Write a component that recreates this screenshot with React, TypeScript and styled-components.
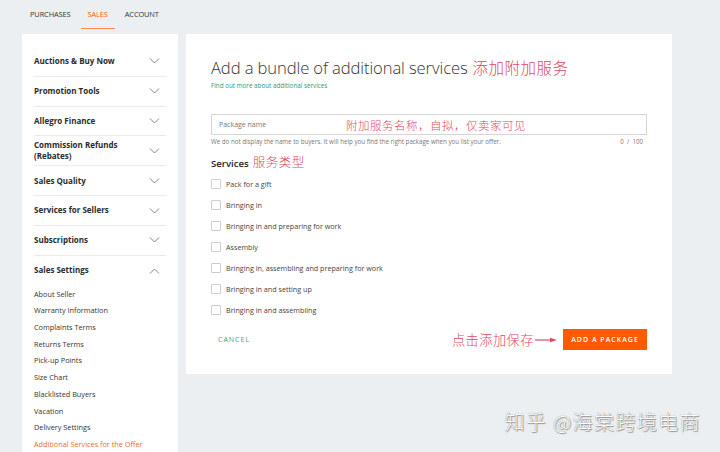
import styled, { createGlobalStyle } from "styled-components";

const GlobalStyle = createGlobalStyle`
  html, body {
    margin: 0;
    padding: 0;
    background: #eceff2;
    font-family: "Open Sans", "Noto Sans CJK SC", sans-serif;
    color: #222;
  }
  * { box-sizing: border-box; }
`;

const Page = styled.div`
  position: relative;
  width: 720px;
  height: 452px;
  overflow: hidden;
  padding-left: 22px;
`;

const Tabs = styled.nav`
  display: flex;
  height: 34px;
  padding-left: 8px;
  gap: 17px;
`;

const Tab = styled.div<{ $active?: boolean }>`
  display: flex;
  align-items: center;
  height: 29px;
  font-size: 7.4px;
  letter-spacing: -0.1px;
  color: ${(p) => (p.$active ? "#ff5a00" : "#333")};
  border-bottom: 1px solid ${(p) => (p.$active ? "#ff8a50" : "transparent")};
  ${(p) => p.$active && "margin: 0 -7px; padding: 0 7px;"}
`;

const Layout = styled.div`
  display: grid;
  grid-template-columns: 156px 486px;
  gap: 8px;
  align-items: start;
`;

const Sidebar = styled.aside`
  background: #fff;
  padding: 13px 12px 0 12px;
  height: 430px;
`;

const Row = styled.div<{ $last?: boolean }>`
  display: flex;
  align-items: center;
  justify-content: space-between;
  min-height: 29.8px;
  padding: 4px 0;
  border-bottom: ${(p) => (p.$last ? "none" : "1px solid #ececec")};
`;

const RowTitle = styled.span<{ $narrow?: boolean }>`
  font-size: 8px;
  font-weight: 700;
  line-height: 10.5px;
  color: #2b2b2b;
  max-width: ${(p) => (p.$narrow ? "100px" : "none")};
`;

const Chevron = styled.svg`
  width: 11px;
  height: 6px;
  margin-right: 6px;
  flex-shrink: 0;
`;

const SubList = styled.ul`
  list-style: none;
  margin: 0;
  padding: 0;
`;

const SubItem = styled.li<{ $active?: boolean }>`
  font-size: 7.3px;
  line-height: 16.7px;
  color: ${(p) => (p.$active ? "#f06a26" : "#333")};
`;

const Card = styled.main`
  background: #fff;
  height: 340px;
  padding: 22px 25px 0 25px;
`;

const Note = styled.span<{ $size: number }>`
  font-family: "Noto Sans CJK SC", serif;
  font-size: ${(p) => p.$size}px;
  color: #e0485f;
  font-weight: 300;
  letter-spacing: 0.5px;
`;

const TitleRow = styled.div`
  display: flex;
  align-items: baseline;
  gap: 5px;
`;

const Title = styled.h1`
  margin: 0;
  font-size: 16.6px;
  font-weight: 300;
  color: #333;
  letter-spacing: -0.1px;
`;

const HelpLink = styled.div`
  font-size: 6.3px;
  color: #2b9a7a;
  margin-top: 2px;
`;

const InputBox = styled.div`
  display: flex;
  align-items: center;
  margin-top: 24px;
  height: 21px;
  border: 1px solid #d6d6d6;
  padding-left: 7px;
`;

const Placeholder = styled.span`
  font-size: 7px;
  color: #777;
  width: 127px;
`;

const HelperRow = styled.div`
  display: flex;
  justify-content: space-between;
  font-size: 6.2px;
  color: #777;
  margin-top: 2px;
  padding-right: 4px;
`;

const SectionTitle = styled.div`
  display: flex;
  align-items: baseline;
  gap: 4px;
  margin-top: 6px;
  font-size: 9.6px;
  font-weight: 600;
  color: #222;
`;

const Options = styled.div`
  display: flex;
  flex-direction: column;
  margin-top: 2px;
`;

const Option = styled.label`
  display: flex;
  align-items: center;
  gap: 5px;
  height: 21px;
  font-size: 7.2px;
  color: #444;
`;

const Box = styled.span`
  width: 10px;
  height: 10px;
  border: 1px solid #cfcfcf;
  border-radius: 1px;
`;

const Actions = styled.div`
  display: flex;
  align-items: center;
  justify-content: space-between;
  margin-top: 9px;
`;

const CancelButton = styled.button`
  background: none;
  border: none;
  padding: 0 0 0 7px;
  font-family: inherit;
  font-size: 7px;
  letter-spacing: 1px;
  color: #3e9e88;
`;

const SaveGroup = styled.div`
  display: flex;
  align-items: center;
`;

const Arrow = styled.svg`
  width: 22px;
  height: 6px;
  margin: 0 6px 0 1px;
`;

const PrimaryButton = styled.button`
  height: 21px;
  width: 84px;
  border: none;
  background: #ff5a00;
  color: #fff;
  font-family: inherit;
  font-size: 7px;
  font-weight: 600;
  letter-spacing: 1px;
  padding: 0;
`;

const Watermark = styled.div`
  position: absolute;
  right: 19px;
  bottom: 16px;
  font-family: "Noto Sans CJK SC", sans-serif;
  font-size: 20px;
  font-weight: 300;
  color: #fff;
  letter-spacing: 1.4px;
  text-shadow: 0 0 1px #666, 1px 1px 1px #999;
`;

const groups = [
  "Auctions & Buy Now",
  "Promotion Tools",
  "Allegro Finance",
  "Commission Refunds (Rebates)",
  "Sales Quality",
  "Services for Sellers",
  "Subscriptions",
];

const settings = [
  "About Seller",
  "Warranty Information",
  "Complaints Terms",
  "Returns Terms",
  "Pick-up Points",
  "Size Chart",
  "Blacklisted Buyers",
  "Vacation",
  "Delivery Settings",
  "Additional Services for the Offer",
];

const services = [
  "Pack for a gift",
  "Bringing in",
  "Bringing in and preparing for work",
  "Assembly",
  "Bringing in, assembling and preparing for work",
  "Bringing in and setting up",
  "Bringing in and assembling",
];

function ChevronIcon({ up }: { up?: boolean }) {
  return (
    <Chevron viewBox="0 0 11 6">
      <polyline
        points={up ? "1,5.5 5.5,1 10,5.5" : "1,0.5 5.5,5 10,0.5"}
        fill="none"
        stroke="#777"
        strokeWidth="0.9"
      />
    </Chevron>
  );
}

export default function App() {
  return (
    <Page>
      <GlobalStyle />
      <Tabs>
        <Tab>PURCHASES</Tab>
        <Tab $active>SALES</Tab>
        <Tab>ACCOUNT</Tab>
      </Tabs>
      <Layout>
        <Sidebar>
          {groups.map((g) => (
            <Row key={g}>
              <RowTitle $narrow={g.length > 20}>{g}</RowTitle>
              <ChevronIcon />
            </Row>
          ))}
          <Row $last>
            <RowTitle>Sales Settings</RowTitle>
            <ChevronIcon up />
          </Row>
          <SubList>
            {settings.map((s, i) => (
              <SubItem key={s} $active={i === settings.length - 1}>
                {s}
              </SubItem>
            ))}
          </SubList>
        </Sidebar>
        <Card>
          <TitleRow>
            <Title>Add a bundle of additional services</Title>
            <Note $size={15.5}>添加附加服务</Note>
          </TitleRow>
          <HelpLink>Find out more about additional services</HelpLink>
          <InputBox>
            <Placeholder>Package name</Placeholder>
            <Note $size={11.5}>附加服务名称，自拟，仅卖家可见</Note>
          </InputBox>
          <HelperRow>
            <span>
              We do not display the name to buyers. It will help you find the right package when you list your offer.
            </span>
            <span>0&nbsp; /&nbsp; 100</span>
          </HelperRow>
          <SectionTitle>
            Services <Note $size={12.5}>服务类型</Note>
          </SectionTitle>
          <Options>
            {services.map((s) => (
              <Option key={s}>
                <Box />
                {s}
              </Option>
            ))}
          </Options>
          <Actions>
            <CancelButton>CANCEL</CancelButton>
            <SaveGroup>
              <Note $size={13.2}>点击添加保存</Note>
              <Arrow viewBox="0 0 22 6">
                <line x1="0" y1="3" x2="17" y2="3" stroke="#e0485f" strokeWidth="1.2" />
                <polygon points="15,0.8 22,3 15,5.2" fill="#e0485f" />
              </Arrow>
              <PrimaryButton>ADD A PACKAGE</PrimaryButton>
            </SaveGroup>
          </Actions>
        </Card>
      </Layout>
      <Watermark>知乎 @海棠跨境电商</Watermark>
    </Page>
  );
}
